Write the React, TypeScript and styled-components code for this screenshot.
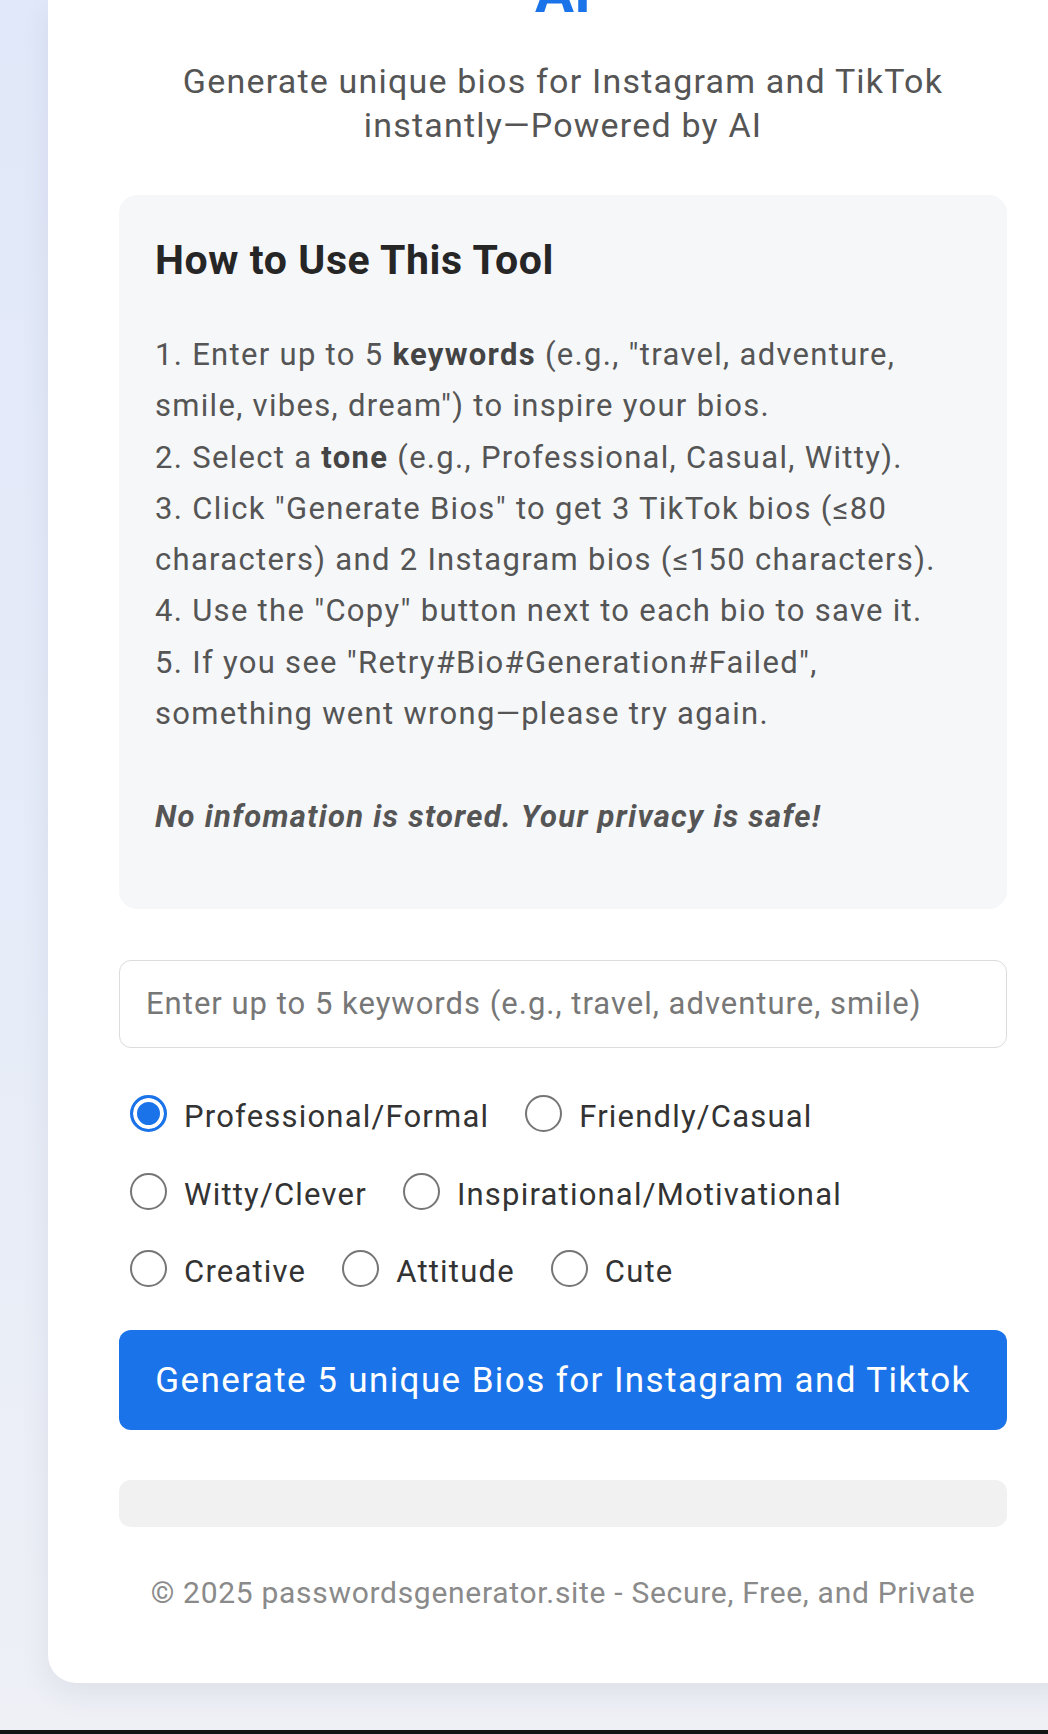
import styled, { createGlobalStyle } from 'styled-components';

const GlobalStyle = createGlobalStyle`
    html, body {
        margin: 0;
        padding: 0;
        overflow: hidden;
    }
    body {
        background: linear-gradient(180deg, #e1e8f9 0%, #e6ecf8 55%, #eef0f6 100%);
        font-family: Roboto, "Noto Sans", "Liberation Sans", sans-serif;
    }
`;

const Page = styled.div`
    height: 1734px;
    padding-left: 48px;
    display: flex;
    flex-direction: column;
    box-sizing: border-box;
    border-bottom: 4px solid #141414;
`;

const Card = styled.main`
    width: 1030px;
    height: 1683px;
    flex-shrink: 0;
    box-sizing: border-box;
    padding: 0 71px;
    background: #fff;
    border-radius: 0 0 28px 28px;
    box-shadow: 0 10px 30px rgba(40, 50, 80, 0.08);
    display: flex;
    flex-direction: column;
`;

const Title = styled.h1`
    margin: -36px 0 0;
    font-size: 58px;
    line-height: 56px;
    font-weight: 700;
    color: #1a73e8;
    text-align: center;
`;

const Subtitle = styled.p`
    margin: 39px 0 0;
    font-size: 34px;
    letter-spacing: 1.2px;
    line-height: 44px;
    color: #555;
    text-align: center;
`;

const InfoBox = styled.section`
    margin-top: 48px;
    padding: 41px 36px 67px;
    background: #f6f7f9;
    border-radius: 18px;
`;

const InfoHeading = styled.h2`
    margin: 0 0 45px;
    font-size: 41px;
    letter-spacing: 0.6px;
    line-height: 48px;
    font-weight: 700;
    color: #262626;
`;

const InfoText = styled.p`
    margin: 0;
    font-size: 31px;
    letter-spacing: 1.3px;
    line-height: 51.3px;
    color: #555;

    b {
        color: #444;
    }
`;

const Note = styled.span`
    font-weight: 700;
    font-style: italic;
    color: #555;
`;

const KeywordInput = styled.input`
    margin-top: 51px;
    height: 88px;
    box-sizing: border-box;
    padding: 0 26px;
    border: 1.5px solid #dcdcdc;
    border-radius: 12px;
    font-family: inherit;
    font-size: 31px;
    letter-spacing: 1px;
    color: #333;
    outline: none;

    &::placeholder {
        color: #777;
    }
`;

const ToneGroup = styled.div`
    margin-top: 30px;
    padding-left: 11px;
    display: flex;
    flex-wrap: wrap;
    column-gap: 36px;
`;

const ToneOption = styled.label`
    height: 77.5px;
    display: flex;
    align-items: center;
    gap: 17px;
    font-size: 31px;
    letter-spacing: 1.2px;
    color: #333;
`;

const Radio = styled.input`
    appearance: none;
    margin: 0 0 6px;
    width: 37px;
    height: 37px;
    flex-shrink: 0;
    box-sizing: border-box;
    border-radius: 50%;
    border: 2.5px solid #767676;
    background: #fff;

    &:checked {
        border: 3px solid #1a73e8;
        background: #1a73e8;
        box-shadow: inset 0 0 0 4px #fff;
    }
`;

const GenerateButton = styled.button`
    margin-top: 20px;
    height: 100px;
    border: none;
    border-radius: 12px;
    background: #1a73e8;
    color: #fff;
    font-family: inherit;
    font-size: 35px;
    letter-spacing: 1.4px;
`;

const ResultBar = styled.div`
    margin-top: 50px;
    height: 47px;
    background: #f1f1f1;
    border-radius: 12px;
`;

const Footer = styled.footer`
    margin-top: 46px;
    font-size: 30px;
    letter-spacing: 0.7px;
    line-height: 40px;
    color: #8a8a8a;
    text-align: center;
`;

const tones = [
    'Professional/Formal',
    'Friendly/Casual',
    'Witty/Clever',
    'Inspirational/Motivational',
    'Creative',
    'Attitude',
    'Cute',
];

const App = () => {
    return (
        <>
            <GlobalStyle />
            <Page>
                <Card>
                    <Title>AI</Title>
                    <Subtitle>
                        Generate unique bios for Instagram and TikTok
                        <br />
                        instantly—Powered by AI
                    </Subtitle>

                    <InfoBox>
                        <InfoHeading>How to Use This Tool</InfoHeading>
                        <InfoText>
                            1. Enter up to 5 <b>keywords</b> (e.g., "travel, adventure, smile, vibes, dream") to inspire your bios.
                            <br />
                            2. Select a <b>tone</b> (e.g., Professional, Casual, Witty).
                            <br />
                            3. Click "Generate Bios" to get 3 TikTok bios (≤80 characters) and 2 Instagram bios (≤150 characters).
                            <br />
                            4. Use the "Copy" button next to each bio to save it.
                            <br />
                            5. If you see "Retry#Bio#Generation#Failed", something went wrong—please try again.
                            <br />
                            <br />
                            <Note>No infomation is stored. Your privacy is safe!</Note>
                        </InfoText>
                    </InfoBox>

                    <KeywordInput placeholder='Enter up to 5 keywords (e.g., travel, adventure, smile)' />

                    <ToneGroup>
                        {tones.map((tone, i) => (
                            <ToneOption key={tone}>
                                <Radio type='radio' name='tone' defaultChecked={i === 0} />
                                {tone}
                            </ToneOption>
                        ))}
                    </ToneGroup>

                    <GenerateButton>Generate 5 unique Bios for Instagram and Tiktok</GenerateButton>

                    <ResultBar />

                    <Footer>© 2025 passwordsgenerator.site - Secure, Free, and Private</Footer>
                </Card>
            </Page>
        </>
    );
};

export default App;
